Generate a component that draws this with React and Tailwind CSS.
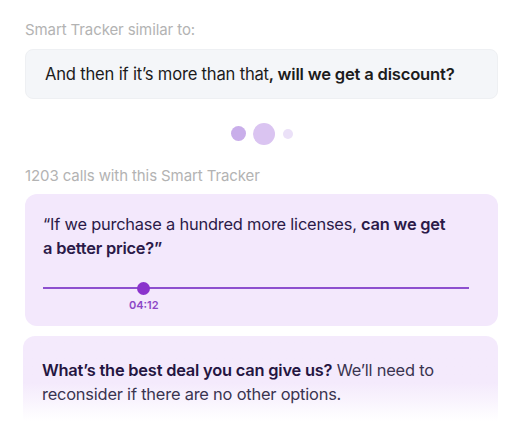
import React from 'react';

const App = () => {
    return (
        <div className="w-[530px] h-[442px] bg-white overflow-hidden font-['Inter',sans-serif] px-[25px] pt-[20px]">
            {/* Similar to */}
            <div className="text-[15px] text-[#b3b3b3] leading-5 tracking-[-0.1px]">Smart Tracker similar to:</div>
            <div className="mt-[9px] w-[473px] h-[50px] rounded-lg bg-[#f4f6f9] border border-[#eef0f3] flex items-center pl-[19px] pt-[1px] text-[16.6px] text-[#1c1c1c] tracking-[-0.2px]">
                <span>And then if it’s more than that<span className="font-semibold">, will we get a discount?</span></span>
            </div>

            {/* Loader dots */}
            <div className="h-[66px] flex items-center justify-center pr-[7px] pt-[3px]">
                <div className="w-[15px] h-[15px] rounded-full bg-[#c9aeea]" />
                <div className="ml-[7px] w-[22px] h-[22px] rounded-full bg-[#dac4f1]" />
                <div className="ml-[8px] w-[10px] h-[10px] rounded-full bg-[#ebe1f8]" />
            </div>

            <div className="mt-[1px] text-[15px] text-[#b3b3b3] leading-5 tracking-[-0.1px]">1203 calls with this Smart Tracker</div>

            {/* Main card */}
            <div className="mt-[8px] w-[473px] h-[132px] rounded-xl bg-[#f3e8fc] pl-[18px] pr-[30px] pt-[18px]">
                <p className="w-[408px] text-[16.4px] leading-6 text-[#2b1a48] tracking-[-0.2px]">
                    “If we purchase a hundred more licenses, <span className="font-semibold">can we get a better price?”</span>
                </p>
                <div className="mt-[22px] relative h-[12px] w-[426px] flex items-center">
                    <div className="w-full h-[2px] bg-[#8d4fcf]" />
                    <div className="absolute left-[94px] top-0 w-[13px] h-[13px] -mt-[0.5px] rounded-full bg-[#8a33cc]" />
                </div>
                <div className="mt-[3px] pl-[86px] text-[11px] font-semibold text-[#8c47c6]">04:12</div>
            </div>

            {/* Faded card */}
            <div className="mt-[10px] -ml-[2px] w-[475px] h-[85px] rounded-t-xl bg-gradient-to-b from-[#f4eafc] from-55% to-white pl-[19px] pr-[30px] pt-[22px]">
                <p className="text-[16.4px] leading-6 text-[#3a3450] tracking-[-0.2px]">
                    <span className="font-semibold text-[#241541]">What’s the best deal you can give us?</span> We’ll need to reconsider if there are no other options.
                </p>
            </div>
        </div>
    );
};

export default App;
